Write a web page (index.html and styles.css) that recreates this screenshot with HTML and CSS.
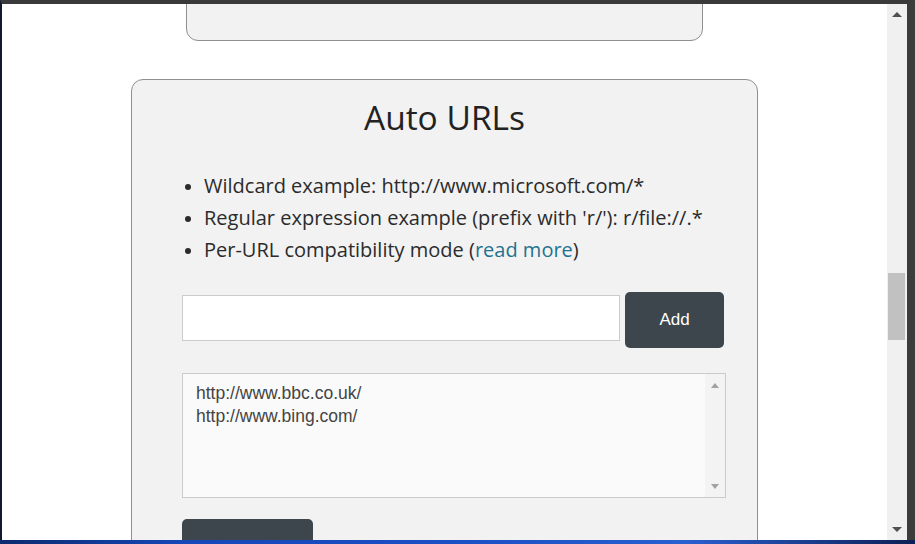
FILE: index.html
```html
<!DOCTYPE html>
<html lang="en">
<head>
    <meta charset="UTF-8">
    <meta name="viewport" content="width=device-width, initial-scale=1.0">
    <title>Auto URLs</title>
    <link rel="stylesheet" href="styles.css">
</head>
<body>
    <div class="window">
        <div class="viewport">
            <div class="page">
                <!-- previous section, scrolled mostly out of view -->
                <div class="card card-prev"></div>

                <!-- Auto URLs section -->
                <div class="card card-main">
                    <h2 class="title">Auto URLs</h2>
                    <ul class="hints">
                        <li>Wildcard example: http://www.microsoft.com/*</li>
                        <li>Regular expression example (prefix with 'r/'): r/file://.*</li>
                        <li>Per-URL compatibility mode (<a href="#" class="link">read more</a>)</li>
                    </ul>

                    <div class="add-row">
                        <input type="text" class="url-input">
                        <button class="btn btn-add">Add</button>
                    </div>

                    <div class="url-list">
                        <div class="url-lines">
                            <div>http://www.bbc.co.uk/</div>
                            <div>http://www.bing.com/</div>
                        </div>
                        <div class="mini-scroll">
                            <span class="arrow arrow-up small"></span>
                            <span class="arrow arrow-down small"></span>
                        </div>
                    </div>

                    <button class="btn btn-save"></button>
                </div>
            </div>

            <div class="scrollbar">
                <span class="arrow arrow-up"></span>
                <div class="track">
                    <div class="thumb"></div>
                </div>
                <span class="arrow arrow-down"></span>
            </div>
        </div>
        <div class="desktop"></div>
    </div>
</body>
</html>
```

FILE: styles.css
```css
* {
    margin: 0;
    padding: 0;
    box-sizing: border-box;
}

body {
    width: 915px;
    height: 544px;
    overflow: hidden;
    background: #0d1426;
    font-family: 'Open Sans', 'Noto Sans', sans-serif;
}

/* Window frame */
.window {
    display: flex;
    flex-direction: column;
    width: 915px;
    height: 544px;
    border-top: 4px solid #3a3a3a;
    border-left: 2px solid #111a2c;
    border-right: 8px solid #3c3c3c;
}

.viewport {
    display: flex;
    height: 536px;
}

.page {
    flex: 1;
    background: #fff;
    overflow: hidden;
    display: flex;
    flex-direction: column;
    align-items: center;
}

.desktop {
    flex: 1;
    margin-left: -2px;
    margin-right: -8px;
    background: linear-gradient(90deg, #0c2a6e 0%, #1547b8 20%, #1b4fc4 50%, #2a5fd0 75%, #0d1f55 100%);
}

/* Page scrollbar */
.scrollbar {
    width: 20px;
    background: #f0f0f0;
    display: flex;
    flex-direction: column;
    align-items: center;
}

.track {
    flex: 1;
    width: 100%;
    padding-top: 256px;
}

.thumb {
    width: 17px;
    height: 67px;
    margin-left: 1px;
    background: #c1c1c1;
}

.arrow {
    width: 0;
    height: 0;
    border-left: 5px solid transparent;
    border-right: 5px solid transparent;
}

.arrow-up {
    margin-top: 8px;
    border-bottom: 5px solid #505050;
}

.arrow-down {
    margin-bottom: 8px;
    border-top: 5px solid #505050;
}

.arrow.small {
    border-left-width: 4px;
    border-right-width: 4px;
}

.arrow-up.small {
    margin-top: 9px;
    border-bottom: 5px solid #a3a3a3;
}

.arrow-down.small {
    margin-bottom: 8px;
    border-top: 5px solid #a3a3a3;
}

/* Cards */
.card {
    background: #f2f2f2;
    border: 1px solid #8f8f8f;
    border-radius: 12px;
}

.card-prev {
    width: 517px;
    height: 60px;
    margin-top: -23px;
    flex-shrink: 0;
}

.card-main {
    width: 627px;
    margin-top: 38px;
    padding: 13px 32px 0 50px;
    flex-shrink: 0;
    height: 520px;
}

.title {
    text-align: center;
    font-size: 33.5px;
    font-weight: 400;
    color: #222;
    line-height: 48px;
    margin-left: -18px;
}

.hints {
    margin-top: 29px;
    padding-left: 22px;
    color: #2b2b2b;
    font-size: 20px;
    line-height: 32px;
}

.hints li::marker {
    font-size: 18px;
}

.link {
    color: #1f7290;
    text-decoration: none;
}

/* Add row */
.add-row {
    display: flex;
    align-items: flex-start;
    gap: 5px;
    margin-top: 26px;
}

.url-input {
    width: 438px;
    height: 46px;
    margin-top: 3px;
    border: 1px solid #cbcbcb;
    background: #fff;
}

.btn {
    border: none;
    border-radius: 5px;
    background: #3d464d;
    color: #fff;
    font-family: 'Liberation Sans', Arial, sans-serif;
    font-size: 17px;
}

.btn-add {
    width: 99px;
    height: 56px;
}

/* URL list box */
.url-list {
    display: flex;
    width: 544px;
    height: 125px;
    margin-top: 25px;
    border: 1px solid #cbcbcb;
    background: #fafafa;
}

.url-lines {
    flex: 1;
    padding: 8px 13px;
    font-family: 'Liberation Sans', Arial, sans-serif;
    font-size: 17.5px;
    line-height: 23px;
    color: #444;
}

.mini-scroll {
    width: 20px;
    background: #f3f3f3;
    display: flex;
    flex-direction: column;
    justify-content: space-between;
    align-items: center;
}

.btn-save {
    display: block;
    width: 131px;
    height: 44px;
    margin-top: 21px;
}
```
